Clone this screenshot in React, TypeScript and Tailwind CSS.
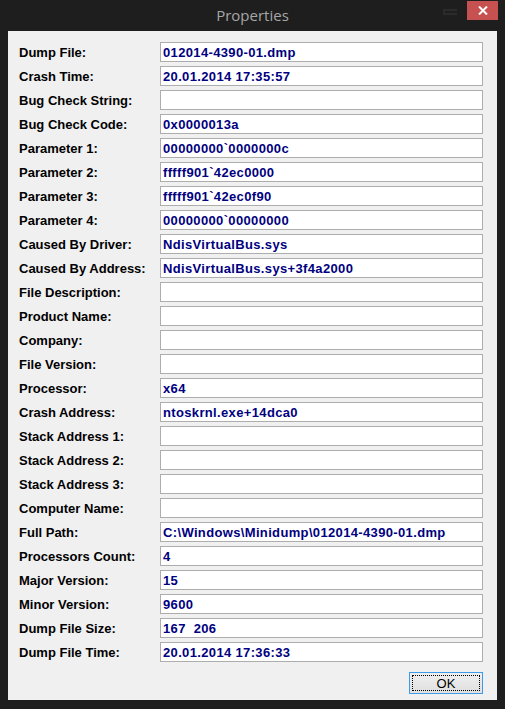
import React from "react";

const rows: [string, string][] = [
  ["Dump File:", "012014-4390-01.dmp"],
  ["Crash Time:", "20.01.2014 17:35:57"],
  ["Bug Check String:", ""],
  ["Bug Check Code:", "0x0000013a"],
  ["Parameter 1:", "00000000`0000000c"],
  ["Parameter 2:", "fffff901`42ec0000"],
  ["Parameter 3:", "fffff901`42ec0f90"],
  ["Parameter 4:", "00000000`00000000"],
  ["Caused By Driver:", "NdisVirtualBus.sys"],
  ["Caused By Address:", "NdisVirtualBus.sys+3f4a2000"],
  ["File Description:", ""],
  ["Product Name:", ""],
  ["Company:", ""],
  ["File Version:", ""],
  ["Processor:", "x64"],
  ["Crash Address:", "ntoskrnl.exe+14dca0"],
  ["Stack Address 1:", ""],
  ["Stack Address 2:", ""],
  ["Stack Address 3:", ""],
  ["Computer Name:", ""],
  ["Full Path:", "C:\\Windows\\Minidump\\012014-4390-01.dmp"],
  ["Processors Count:", "4"],
  ["Major Version:", "15"],
  ["Minor Version:", "9600"],
  ["Dump File Size:", "167\u00a0\u00a0206"],
  ["Dump File Time:", "20.01.2014 17:36:33"],
];

export default function App() {
  return (
    <div className="w-[505px] h-[709px] bg-[#1e1e1e] flex flex-col select-none">
      <div className="relative h-[31px] flex items-center justify-center">
        <span
          className="text-[15px] text-[#a6a6a6] leading-none"
          style={{ fontFamily: '"Open Sans", "Noto Sans", sans-serif' }}
        >
          Properties
        </span>
        <div className="absolute left-[443px] top-[9px] w-[14px] h-[6px] border-[2px] border-[#2b2b2b] border-r-0" />
        <div className="absolute left-[467px] top-[1px] w-[31px] h-[19px] bg-[#c75050] flex items-center justify-center">
          <svg width="10" height="9" viewBox="0 0 10 9">
            <path d="M1 0.5 L9 8.5 M9 0.5 L1 8.5" stroke="#ffffff" strokeWidth="2" />
          </svg>
        </div>
      </div>
      <div
        className="mx-[8px] mb-[9px] flex-1 bg-[#f0f0f0] pl-[11px] pr-[14px] pt-[11px] pb-[6px] flex flex-col"
        style={{ fontFamily: '"Liberation Sans", Arial, sans-serif' }}
      >
        <div className="flex flex-col gap-[4px]">
          {rows.map(([label, value]) => (
            <div key={label} className="flex items-center h-[20px]">
              <div className="w-[141px] text-[13px] font-bold text-black leading-none">{label}</div>
              <div className="w-[323px] h-[20px] bg-white border border-[#adadad] flex items-center pl-[2px] text-[13px] tracking-[0.35px] font-bold text-[#000080] leading-none whitespace-pre">
                {value}
              </div>
            </div>
          ))}
        </div>
        <div className="mt-[10px] flex justify-end">
          <div className="w-[74px] h-[22px] border border-[#3d9be9] bg-gradient-to-b from-[#efefef] to-[#e0e0e0] p-[2px]">
            <div className="w-full h-full border border-dotted border-black flex items-center justify-center text-[13px] text-black leading-none">
              OK
            </div>
          </div>
        </div>
      </div>
    </div>
  );
}
